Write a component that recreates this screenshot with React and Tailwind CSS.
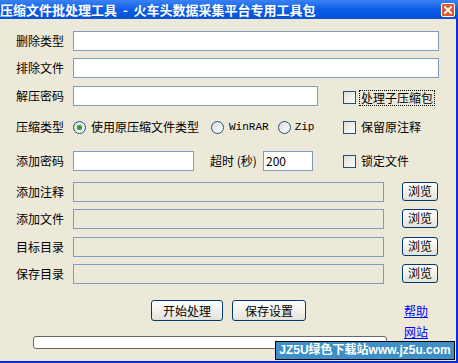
import React from 'react'

const FONT = { fontFamily: '"Noto Sans CJK SC", "Liberation Sans", sans-serif' }
const MONO = { fontFamily: '"Liberation Mono", "Noto Sans CJK SC", monospace' }

function Field({ w = 'w-[366px]', disabled = false, value = '' }) {
  return (
    <div
      className={`${w} h-[20px] shrink-0 border border-[#7F9DB9] ${disabled ? 'bg-[#ECE9D8]' : 'bg-white'} text-[12px] leading-[18px] pl-[2px] text-black`}
    >
      {value}
    </div>
  )
}

function Label({ children }) {
  return <div className="w-[57px] shrink-0 text-[12px] leading-[20px] text-black whitespace-nowrap">{children}</div>
}

function CheckBox({ label, focus }) {
  return (
    <div className="flex items-center shrink-0">
      <div className="w-[13px] h-[13px] shrink-0 border border-[#1C5180] bg-gradient-to-br from-[#DCDCD7] to-white" />
      <div
        className={`ml-[3px] px-[1px] text-[12px] leading-[14px] text-black whitespace-nowrap border ${focus ? 'border-dotted border-black' : 'border-transparent'}`}
      >
        {label}
      </div>
    </div>
  )
}

function Radio({ checked }) {
  return (
    <div className="w-[13px] h-[13px] shrink-0 rounded-full border border-[#1C5180] bg-gradient-to-br from-[#DCDCD7] to-white flex items-center justify-center">
      {checked && <div className="w-[5px] h-[5px] rounded-full bg-[#21A121]" />}
    </div>
  )
}

function Button({ children, w, h = 'h-[21px]' }) {
  return (
    <button
      className={`block ${w} ${h} shrink-0 rounded-[3px] border border-[#003C74] bg-gradient-to-b from-white to-[#E3E2DA] text-[12px] leading-[16px] text-black`}
    >
      {children}
    </button>
  )
}

export default function App() {
  return (
    <div className="relative w-[458px] h-[363px] flex flex-col overflow-hidden" style={FONT}>
      {/* title bar */}
      <div className="h-[19px] shrink-0 flex items-center justify-between bg-gradient-to-b from-[#3A83F4] via-[#0A5DE8] to-[#0650D6]">
        <div className="text-white font-bold text-[13px] leading-[19px] whitespace-pre">
          压缩文件批处理工具  -  火车头数据采集平台专用工具包
        </div>
        <div className="mr-[3px] w-[14px] h-[14px] rounded-[2px] border border-white bg-[#E2552B] flex items-center justify-center">
          <svg width="8" height="8" viewBox="0 0 8 8">
            <path d="M1 1L7 7M7 1L1 7" stroke="white" strokeWidth="2" strokeLinecap="square" />
          </svg>
        </div>
      </div>

      {/* body */}
      <div className="flex-1 bg-[#ECE9D8] border-r-2 border-b-2 border-[#0831D9] pl-[16px] pr-[17px] pt-[12px] flex flex-col">
        <div className="flex items-center h-[20px]">
          <Label>删除类型</Label>
          <Field />
        </div>
        <div className="flex items-center h-[20px] mt-[7px]">
          <Label>排除文件</Label>
          <Field />
        </div>
        <div className="flex items-center h-[20px] mt-[8px]">
          <Label>解压密码</Label>
          <Field w="w-[245px]" />
          <div className="ml-[25px] mt-[3px] flex">
            <CheckBox label="处理子压缩包" focus />
          </div>
        </div>
        <div className="flex items-center h-[20px] mt-[11px]">
          <Label>压缩类型</Label>
          <div className="w-[270px] shrink-0 flex items-center">
            <Radio checked />
            <span className="ml-[5px] text-[12px] leading-[20px] text-black whitespace-nowrap">使用原压缩文件类型</span>
            <div className="ml-[12px] flex">
              <Radio />
            </div>
            <span className="ml-[5px] text-[11px] leading-[20px] text-black" style={MONO}>WinRAR</span>
            <div className="ml-[9px] flex">
              <Radio />
            </div>
            <span className="ml-[4px] text-[11px] leading-[20px] text-black" style={MONO}>Zip</span>
          </div>
          <CheckBox label="保留原注释" />
        </div>
        <div className="flex items-center h-[20px] mt-[14px]">
          <Label>添加密码</Label>
          <Field w="w-[121px]" />
          <span className="ml-[16px] w-[53px] shrink-0 text-[12px] leading-[20px] text-black whitespace-nowrap">超时 (秒)</span>
          <Field w="w-[50px]" value="200" />
          <div className="ml-[30px] flex">
            <CheckBox label="锁定文件" />
          </div>
        </div>
        {['添加注释', '添加文件', '目标目录', '保存目录'].map((t, i) => (
          <div key={t} className={`flex items-center h-[20px] ${i === 0 ? 'mt-[11px]' : i === 2 ? 'mt-[8px]' : 'mt-[7px]'}`}>
            <Label>{t}</Label>
            <Field w="w-[311px]" disabled />
            <div className="ml-[18px] -mt-[2px] flex">
              <Button w="w-[36px]" h="h-[19px]">浏览</Button>
            </div>
          </div>
        ))}

        {/* action buttons */}
        <div className="flex items-center h-[21px] mt-[16px]">
          <div className="ml-[135px] flex">
            <Button w="w-[72px]">开始处理</Button>
          </div>
          <div className="ml-[9px] flex">
            <Button w="w-[74px]">保存设置</Button>
          </div>
          <a className="ml-[98px] text-[12px] text-[#0000FF] underline leading-[14px]">帮助</a>
        </div>
        <div className="flex items-start">
          <div className="ml-[17px] mt-[15px] w-[354px] h-[13px] shrink-0 rounded-[3px] border border-[#686868] bg-white" />
          <a className="ml-[17px] mt-[4px] text-[12px] text-[#0000FF] underline leading-[14px]">网站</a>
        </div>
      </div>

      {/* watermark overlay */}
      <div className="absolute left-[275px] top-[341px] w-[180px] h-[19px] border border-black bg-[#3E8FC5] flex items-center justify-center">
        <span
          className="text-white font-bold text-[12px] leading-[17px] whitespace-nowrap"
          style={{ fontFamily: '"Liberation Sans", "Noto Sans CJK SC", sans-serif' }}
        >
          JZ5U绿色下载站www.jz5u.com
        </span>
      </div>
    </div>
  )
}
